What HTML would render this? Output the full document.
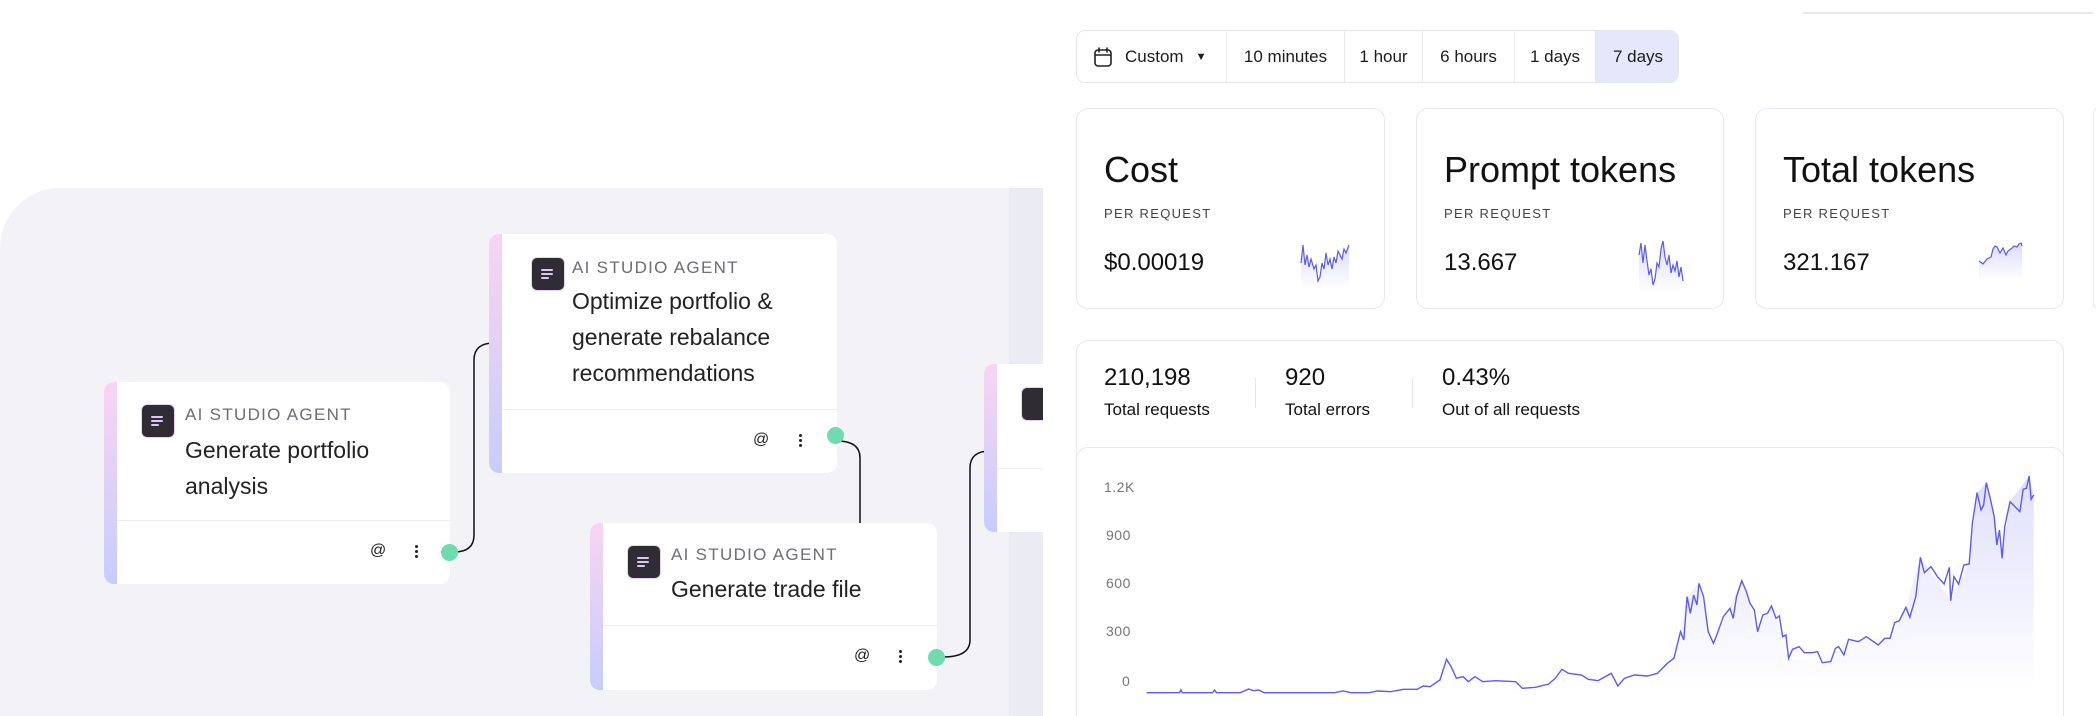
<!DOCTYPE html>
<html style="overflow:hidden;width:2096px;height:716px"><head><meta charset="utf-8"><style>
*{box-sizing:border-box;margin:0;padding:0}
html,body{overflow:hidden}
body{width:2096px;height:716px;position:relative;background:#fff;font-family:"Liberation Sans",sans-serif;color:#1c1c1e}
#wrap{position:absolute;left:0;top:0;width:2096px;height:716px;overflow:hidden}
.abs{position:absolute}
.canvas{left:0;top:188px;width:1043px;height:528px;background:#f3f3f7;border-top-left-radius:60px}
.strip{left:1009px;top:188px;width:40px;height:528px;background:#ebebf3}
.card{position:absolute;background:#fff;border-radius:10px;overflow:hidden}
.card .bar{position:absolute;left:0;top:0;bottom:0;width:13px;background:linear-gradient(#f9d4f2,#c6cdfc)}
.icon{position:absolute;width:32px;height:32px;background:#2f2d33;border-radius:5px;box-shadow:0 0 0 1px #e8d2f2}
.icon i{position:absolute;left:9px;height:2px;background:#d9c6f5;border-radius:1px}
.lbl{position:absolute;font-size:17px;letter-spacing:1.3px;color:#6d6d72}
.ttl{position:absolute;font-size:23px;line-height:36px;color:#222}
.div{position:absolute;left:13px;right:0;height:1px;background:#efeff2}
.at{position:absolute;font-size:16px;color:#222}
.dots{position:absolute;width:3px}
.dots b{display:block;width:3px;height:3px;border-radius:50%;background:#222;margin-bottom:2px}
.green{position:absolute;width:17px;height:17px;border-radius:50%;background:#6fdcb0}
.sel{left:1076px;top:30px;width:603px;height:53px;border:1.5px solid #e6e7ef;border-radius:9px;overflow:hidden;font-size:17px}
.seg{position:absolute;top:0;height:100%;display:flex;align-items:center;justify-content:center;border-left:1.5px solid #e6e7ef}
.sc{position:absolute;top:108px;height:201px;border:1.5px solid #e8e8ef;border-radius:12px;background:#fff}
.sc .t{position:absolute;left:27px;top:40px;font-size:36px;color:#111}
.sc .p{position:absolute;left:27px;top:97px;font-size:13px;letter-spacing:1.3px;color:#444}
.sc .v{position:absolute;left:27px;top:140px;font-size:24px;color:#111}
.big{left:1076px;top:340px;width:988px;height:400px;border:1.5px solid #e8e8ef;border-radius:12px}
.chartc{left:1076px;top:447px;width:988px;height:300px;border:1.5px solid #e8e8ef;border-radius:12px;background:#fff}
.num{position:absolute;font-size:24px;color:#111}
.nl{position:absolute;font-size:17px;color:#111}
.yl{position:absolute;font-size:14px;color:#777;letter-spacing:.5px}
</style></head><body><div id="wrap">
<div class="abs canvas"></div>
<div class="abs strip"></div>
<svg class="abs" style="left:0;top:0" width="1043" height="716" fill="none" stroke="#111" stroke-width="1.5">
<path d="M454 552 Q474 552 474 535 L474 360 Q474 343 494 343"/>
<path d="M837 441 Q860 441 860 458 L860 523"/>
<path d="M943 657 Q970 657 970 640 L970 468 Q970 451 990 451"/>
</svg>
<div class="card" style="left:104px;top:382px;width:346px;height:202px">
<div class="bar"></div>
<div class="icon" style="left:38px;top:23px"><i style="top:11px;width:12px"></i><i style="top:15px;width:12px"></i><i style="top:19px;width:8px"></i></div>
<div class="lbl" style="left:81px;top:23px">AI STUDIO AGENT</div>
<div class="ttl" style="left:81px;top:50px">Generate portfolio<br>analysis</div>
<div class="div" style="top:138px"></div>
<div class="at" style="left:266px;top:160px">@</div>
<div class="dots" style="left:311px;top:163px"><b></b><b></b><b></b></div>
</div>
<div class="green" style="left:441px;top:544px"></div>
<div class="card" style="left:489px;top:234px;width:348px;height:239px">
<div class="bar"></div>
<div class="icon" style="left:43px;top:24px"><i style="top:11px;width:12px"></i><i style="top:15px;width:12px"></i><i style="top:19px;width:8px"></i></div>
<div class="lbl" style="left:83px;top:24px">AI STUDIO AGENT</div>
<div class="ttl" style="left:83px;top:49px">Optimize portfolio &amp;<br>generate rebalance<br>recommendations</div>
<div class="div" style="top:175px"></div>
<div class="at" style="left:264px;top:197px">@</div>
<div class="dots" style="left:310px;top:200px"><b></b><b></b><b></b></div>
</div>
<div class="green" style="left:827px;top:427px"></div>
<div class="card" style="left:590px;top:523px;width:347px;height:167px">
<div class="bar"></div>
<div class="icon" style="left:38px;top:23px"><i style="top:11px;width:12px"></i><i style="top:15px;width:12px"></i><i style="top:19px;width:8px"></i></div>
<div class="lbl" style="left:81px;top:22px">AI STUDIO AGENT</div>
<div class="ttl" style="left:81px;top:48px">Generate trade file</div>
<div class="div" style="top:102px"></div>
<div class="at" style="left:264px;top:124px">@</div>
<div class="dots" style="left:309px;top:127px"><b></b><b></b><b></b></div>
</div>
<div class="green" style="left:928px;top:649px"></div>
<div class="card" style="left:984px;top:364px;width:100px;height:168px">
<div class="bar"></div>
<div class="icon" style="left:38px;top:24px"></div>
<div class="div" style="top:104px"></div>
</div>
<div class="abs" style="left:1043px;top:0;width:1053px;height:716px;background:#fff"></div>
<div class="abs" style="left:1803px;top:12px;width:290px;height:2px;background:#e8e8ee"></div>
<div class="abs sel">
<div class="seg" style="left:0;width:149px;border-left:none;justify-content:flex-start;padding-left:16px">
<svg width="20" height="22" viewBox="0 0 20 22" fill="none" stroke="#222" stroke-width="1.6"><rect x="2" y="4" width="16" height="16" rx="3"/><path d="M2 9h16M6 1.5v5M14 1.5v5"/></svg>
<span style="margin-left:12px">Custom</span><span style="margin-left:12px;font-size:11px">▼</span></div>
<div class="seg" style="left:149px;width:118px">10 minutes</div>
<div class="seg" style="left:267px;width:78px">1 hour</div>
<div class="seg" style="left:345px;width:92px">6 hours</div>
<div class="seg" style="left:437px;width:81px">1 days</div>
<div class="seg" style="left:518px;width:85px;background:#e5e8fb">7 days</div>
</div>
<div class="sc" style="left:1076px;width:309px"><div class="t">Cost</div><div class="p">PER REQUEST</div><div class="v">$0.00019</div>
<svg class="abs" style="left:222px;top:132px" width="66" height="50"><defs><linearGradient id="g1" x1="0" y1="0" x2="0" y2="1"><stop offset="0" stop-color="#dcdcfb"/><stop offset="1" stop-color="#fff"/></linearGradient></defs><path d="M2 22 L4 4 L6 24 L8 14 L10 26 L12 18 L15 28 L17 24 L19 40 L21 36 L23 22 L25 28 L27 12 L29 24 L31 18 L33 28 L35 16 L37 22 L39 10 L41 14 L43 18 L45 8 L47 12 L50 4 L50 48 L2 48Z" fill="url(#g1)"/><path d="M2 22 L4 4 L6 24 L8 14 L10 26 L12 18 L15 28 L17 24 L19 40 L21 36 L23 22 L25 28 L27 12 L29 24 L31 18 L33 28 L35 16 L37 22 L39 10 L41 14 L43 18 L45 8 L47 12 L50 4" fill="none" stroke="#5b5bf5" stroke-width="1.2"/></svg></div>
<div class="sc" style="left:1416px;width:308px"><div class="t">Prompt tokens</div><div class="p">PER REQUEST</div><div class="v">13.667</div>
<svg class="abs" style="left:220px;top:132px" width="70" height="54"><path d="M2 14 L4 2 L6 22 L8 4 L10 20 L12 34 L14 28 L16 44 L18 38 L20 22 L22 26 L24 8 L26 0 L28 16 L30 24 L32 14 L34 32 L36 24 L38 30 L40 20 L42 36 L44 26 L46 40 L46 52 L2 52Z" fill="url(#g1)"/><path d="M2 14 L4 2 L6 22 L8 4 L10 20 L12 34 L14 28 L16 44 L18 38 L20 22 L22 26 L24 8 L26 0 L28 16 L30 24 L32 14 L34 32 L36 24 L38 30 L40 20 L42 36 L44 26 L46 40" fill="none" stroke="#5b5bf5" stroke-width="1.2"/></svg></div>
<div class="sc" style="left:1755px;width:309px"><div class="t">Total tokens</div><div class="p">PER REQUEST</div><div class="v">321.167</div>
<svg class="abs" style="left:221px;top:132px" width="62" height="44"><path d="M2 20 L6 23 L10 18 L14 16 L16 8 L18 5 L20 6 L23 12 L26 7 L29 14 L31 10 L34 8 L37 5 L40 6 L42 3 L44 2 L45 5 L45 40 L2 40Z" fill="url(#g1)"/><path d="M2 20 L6 23 L10 18 L14 16 L16 8 L18 5 L20 6 L23 12 L26 7 L29 14 L31 10 L34 8 L37 5 L40 6 L42 3 L44 2 L45 5" fill="none" stroke="#5b5bf5" stroke-width="1.2"/></svg></div>
<div class="abs" style="left:2093px;top:108px;width:10px;height:201px;border:1.5px solid #e8e8ef;border-radius:12px"></div>
<div class="abs big"></div>
<div class="num" style="left:1104px;top:364px">210,198</div>
<div class="nl" style="left:1104px;top:400px">Total requests</div>
<div class="abs" style="left:1255px;top:378px;width:1px;height:30px;background:#e6e6ec"></div>
<div class="num" style="left:1285px;top:364px">920</div>
<div class="nl" style="left:1285px;top:400px">Total errors</div>
<div class="abs" style="left:1412px;top:378px;width:1px;height:30px;background:#e6e6ec"></div>
<div class="num" style="left:1442px;top:364px">0.43%</div>
<div class="nl" style="left:1442px;top:400px">Out of all requests</div>
<div class="abs chartc"></div>
<div class="yl" style="left:1104px;top:479px">1.2K</div>
<div class="yl" style="left:1106px;top:527px">900</div>
<div class="yl" style="left:1106px;top:575px">600</div>
<div class="yl" style="left:1106px;top:623px">300</div>
<div class="yl" style="left:1122px;top:673px">0</div>
<svg class="abs" style="left:1061px;top:330px" width="1036" height="386" viewBox="0 0 1572 1158" preserveAspectRatio="none">
<defs><linearGradient id="ga" x1="0" y1="0" x2="0" y2="1"><stop offset="0" stop-color="#dcdcfb"/><stop offset="1" stop-color="#ffffff"/></linearGradient></defs>
<path d="M130 1088 L180 1088 L285 1077 L308 1088 L415 1088 L468 1088 L520 1078 L575 1050 L585 988 L600 1045 L700 1075 L760 1018 L845 1068 L905 1030 L930 985 L950 800 L968 760 L990 940 L1033 752 L1057 905 L1078 828 L1104 985 L1155 998 L1195 928 L1258 925 L1282 832 L1304 682 L1350 812 L1378 702 L1390 488 L1404 458 L1428 685 L1440 515 L1469 438 L1476 495 L1476 1088 Z" fill="url(#ga)" opacity="0.9"/>
<path d="M130 1088 L180 1088 L182 1080 L184 1088 L230 1088 L233 1080 L236 1088 L272 1088 L285 1077 L292 1082 L300 1080 L308 1088 L415 1088 L428 1083 L440 1088 L468 1088 L480 1083 L500 1085 L520 1078 L540 1078 L550 1068 L560 1070 L575 1050 L585 988 L592 1010 L600 1045 L610 1040 L618 1055 L628 1040 L640 1055 L660 1052 L690 1055 L700 1075 L720 1072 L740 1062 L750 1045 L760 1018 L770 1030 L790 1035 L800 1048 L815 1052 L835 1030 L845 1068 L855 1045 L870 1035 L890 1038 L905 1030 L920 1000 L930 985 L940 905 L945 930 L950 800 L955 850 L960 795 L965 825 L968 760 L975 800 L982 905 L990 940 L995 915 L1005 860 L1015 835 L1020 865 L1025 800 L1033 752 L1040 785 L1045 818 L1052 840 L1057 905 L1065 855 L1072 850 L1078 828 L1085 865 L1090 858 L1095 920 L1100 915 L1104 985 L1110 958 L1120 950 L1128 968 L1140 968 L1148 965 L1155 998 L1168 995 L1175 955 L1180 950 L1188 975 L1195 928 L1210 935 L1222 920 L1240 945 L1250 925 L1258 925 L1265 878 L1272 872 L1282 832 L1288 862 L1297 800 L1304 682 L1310 728 L1320 710 L1330 740 L1340 762 L1348 712 L1350 812 L1355 740 L1362 762 L1370 705 L1378 702 L1383 578 L1390 488 L1396 540 L1400 525 L1404 458 L1410 505 L1416 560 L1420 645 L1424 600 L1428 685 L1432 590 L1440 515 L1450 535 L1455 545 L1460 478 L1465 475 L1469 438 L1472 508 L1476 495" fill="none" stroke="#5b5bf5" stroke-width="1.4" vector-effect="non-scaling-stroke"/>
</svg>
</div></body></html>
